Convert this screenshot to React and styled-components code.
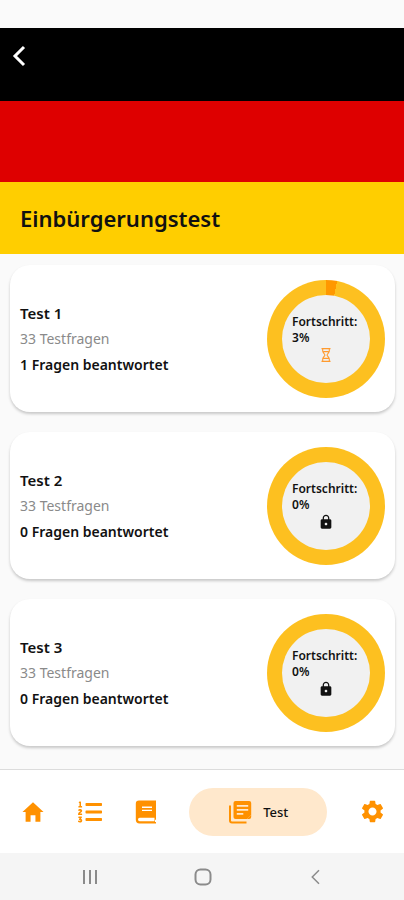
import React from 'react';
import styled, { createGlobalStyle } from 'styled-components';
import { MdSettings, MdLock } from 'react-icons/md';
import { IoMdHome } from 'react-icons/io';
import { FaListOl } from 'react-icons/fa';

const GlobalStyle = createGlobalStyle`
  * {
    box-sizing: border-box;
  }
  body {
    margin: 0;
    background: #fafafa;
    color: #111;
    font-family: 'Noto Sans', 'Open Sans', sans-serif;
  }
  button {
    border: 0;
    padding: 0;
    background: none;
    font: inherit;
    color: inherit;
    cursor: pointer;
  }
  h1, h2, p {
    margin: 0;
  }
  svg {
    display: block;
  }
`;

const Screen = styled.div`
  display: flex;
  flex-direction: column;
  height: 100vh;
`;

const StatusBar = styled.div`
  flex: none;
  height: 28px;
`;

const Header = styled.header`
  flex: none;
`;

const Stripe = styled.div`
  display: flex;
  align-items: ${({ $top }) => ($top ? 'flex-start' : 'center')};
  height: ${({ $height }) => $height};
  padding: ${({ $top }) => ($top ? '16px 8px' : '0 20px')};
  background: ${({ $color }) => $color};
`;

const BackButton = styled.button`
  color: white;
`;

const Title = styled.h1`
  font-size: 22px;
  line-height: 32px;
  font-weight: 600;
`;

const TestList = styled.main`
  flex: 1;
  min-height: 0;
  overflow: hidden;
  display: flex;
  flex-direction: column;
  gap: 20px;
  padding: 11px 9px 11px 10px;
`;

const Card = styled.article`
  flex: none;
  display: flex;
  align-items: center;
  justify-content: space-between;
  height: 147px;
  padding: 0 10px;
  background: white;
  border-radius: 20px;
  box-shadow: 0 2px 3px rgb(0 0 0 / 20%);
`;

const CardTitle = styled.h2`
  font-size: 15px;
  line-height: 26px;
  font-weight: 600;
`;

const CardText = styled.p`
  font-size: 14px;
  line-height: 26px;
  font-weight: ${({ $strong }) => ($strong ? 600 : 400)};
  color: ${({ $strong }) => ($strong ? '#111' : '#8a8a8a')};
`;

const Ring = styled.div`
  display: flex;
  align-items: center;
  justify-content: center;
  width: 118px;
  height: 118px;
  border-radius: 50%;
  background: conic-gradient(#ff9800 ${({ $percent }) => $percent}%, #fdc020 0);
`;

const RingCenter = styled.div`
  display: flex;
  flex-direction: column;
  justify-content: center;
  width: 88px;
  height: 88px;
  padding: 0 10px;
  border-radius: 50%;
  background: #f1f1f1;
  font-size: 12px;
  line-height: 16px;
  font-weight: 600;
  white-space: nowrap;
  svg {
    align-self: center;
    margin-top: 1px;
  }
`;

const TabBar = styled.nav`
  flex: none;
  display: flex;
  align-items: center;
  justify-content: space-between;
  height: 84px;
  padding: 0 18px 0 20px;
  border-top: 1px solid #dcdcdc;
  background: white;
`;

const Tab = styled.button`
  display: flex;
  align-items: center;
  justify-content: center;
  gap: 11px;
  color: #ff9100;
  ${({ $active }) =>
    $active &&
    `
    width: 138px;
    height: 48px;
    border-radius: 24px;
    background: #ffe8cc;
  `}
`;

const TabLabel = styled.span`
  font-size: 13px;
  font-weight: 500;
  color: #111;
`;

const SystemBar = styled.div`
  flex: none;
  display: flex;
  align-items: center;
  justify-content: space-around;
  height: 47px;
  padding: 0 32px 0 34px;
  background: #f5f5f5;
  color: #8b8b8b;
`;

const tests = [
  { id: 1, questions: 33, answered: 1, percent: 3 },
  { id: 2, questions: 33, answered: 0, percent: 0 },
  { id: 3, questions: 33, answered: 0, percent: 0 },
];

const Chevron = ({ size, stroke }) => (
  <svg width={size} height={size} viewBox="0 0 24 24" fill="none" stroke="currentColor" strokeWidth={stroke}>
    <path d="M16 3 7 12l9 9" />
  </svg>
);

const Hourglass = () => (
  <svg width="16" height="16" viewBox="0 0 16 16" fill="none" stroke="#ff9a2e" strokeWidth="1.1">
    <path d="M3.500 1.600h9M3.500 14.400h9M4.700 1.600v2.400c0 1.800 2.200 2.600 2.200 4s-2.200 2.200-2.200 4v2.400M11.300 1.600v2.400c0 1.800-2.200 2.600-2.200 4s2.200 2.200 2.200 4v2.400M5.500 4.600h5M5.500 11.400h5" />
  </svg>
);

const BookIcon = () => (
  <svg width="24" height="24" viewBox="0 0 24 24">
    <path
      fill="currentColor"
      fillRule="evenodd"
      d="M5 .5h17v19.200h-1v2.300h1v1.500H5.500A3.700 3.700 0 0 1 1.800 19.800V3.700A3.200 3.200 0 0 1 5 .5zM5.700 17.800a1.700 1.700 0 0 0 0 3.400h14.800v-3.400z"
    />
    <path stroke="white" strokeWidth="1.400" d="M8 7.200h10M8 10.400h10" />
  </svg>
);

const PagesIcon = () => (
  <svg width="24" height="24" viewBox="0 0 24 24" fill="none">
    <path stroke="currentColor" strokeWidth="2" d="M2 5.500v15a2 2 0 0 0 2 2h14.500" />
    <path
      fill="currentColor"
      d="M7.500 1h13.700a2 2 0 0 1 2 2v12l-4.200 4H7.500a2 2 0 0 1-2-2V3a2 2 0 0 1 2-2z"
    />
    <path fill="currentColor" d="M19 19h2.200a2 2 0 0 0 2-2v-2z" />
    <path stroke="#ffe8cc" strokeWidth="1.700" d="M8.800 5.800h11.400M8.800 9.800h11.400M8.800 13.800h6.500" />
  </svg>
);

const TestCard = ({ test }) => (
  <Card>
    <div>
      <CardTitle>Test {test.id}</CardTitle>
      <CardText>{test.questions} Testfragen</CardText>
      <CardText $strong>{test.answered} Fragen beantwortet</CardText>
    </div>
    <Ring $percent={test.percent}>
      <RingCenter>
        <span>Fortschritt:</span>
        <span>{test.percent}%</span>
        {test.percent > 0 ? <Hourglass /> : <MdLock size={16} />}
      </RingCenter>
    </Ring>
  </Card>
);

const App = () => {
  return (
    <>
      <GlobalStyle />
      <Screen>
        <StatusBar />
        <Header>
          <Stripe $color="#000" $height="73px" $top>
            <BackButton aria-label="Zurück">
              <Chevron size={24} stroke={3} />
            </BackButton>
          </Stripe>
          <Stripe $color="#de0000" $height="81px" />
          <Stripe $color="#ffce00" $height="72px">
            <Title>Einbürgerungstest</Title>
          </Stripe>
        </Header>
        <TestList>
          {tests.map((test) => (
            <TestCard key={test.id} test={test} />
          ))}
        </TestList>
        <TabBar>
          <Tab aria-label="Start">
            <IoMdHome size={26} />
          </Tab>
          <Tab aria-label="Liste">
            <FaListOl size={24} />
          </Tab>
          <Tab aria-label="Buch">
            <BookIcon />
          </Tab>
          <Tab $active>
            <PagesIcon />
            <TabLabel>Test</TabLabel>
          </Tab>
          <Tab aria-label="Einstellungen">
            <MdSettings size={27} />
          </Tab>
        </TabBar>
        <SystemBar>
          <button aria-label="Letzte Apps">
            <svg width="18" height="18" viewBox="0 0 18 18" stroke="currentColor" strokeWidth="2">
              <path d="M3 2v14M9 2v14M15 2v14" />
            </svg>
          </button>
          <button aria-label="Startbildschirm">
            <svg width="18" height="18" viewBox="0 0 18 18" fill="none" stroke="currentColor" strokeWidth="2">
              <rect x="1.500" y="1.500" width="15" height="15" rx="5" />
            </svg>
          </button>
          <button aria-label="Zurück">
            <Chevron size={18} stroke={2} />
          </button>
        </SystemBar>
      </Screen>
    </>
  );
};

export default App;
